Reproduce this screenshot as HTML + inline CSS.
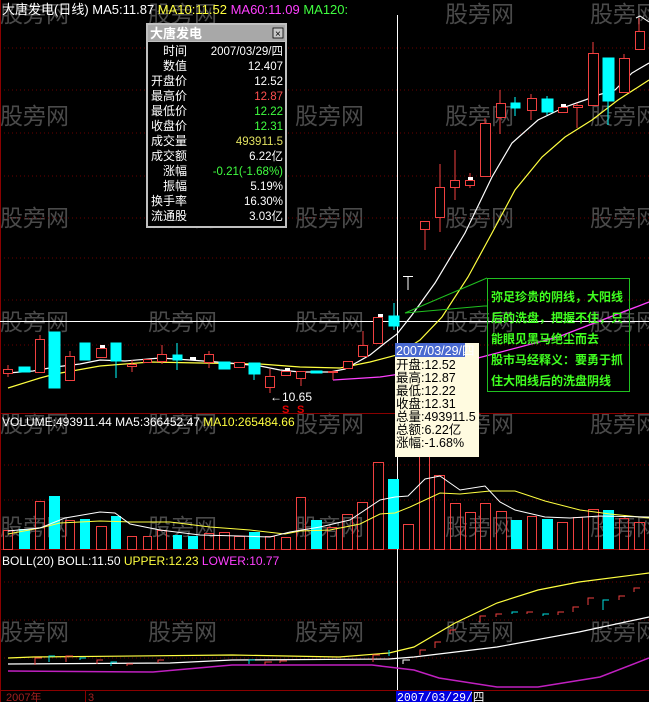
<!DOCTYPE html>
<html><head><meta charset="utf-8"><style>
html,body{margin:0;padding:0;background:#000;width:649px;height:702px;overflow:hidden}
svg{display:block}
text{font-family:"Liberation Sans","Noto Sans CJK SC",sans-serif}
.m{font-family:"Liberation Mono","Noto Sans CJK SC",monospace}
.wm{fill:#4a4a4a;font-size:23px}
</style></head><body>
<svg width="649" height="702" xmlns="http://www.w3.org/2000/svg">
<rect width="649" height="702" fill="#000"/>
<g class="wm">
<text x="0" y="22">股旁网</text><text x="148" y="22">股旁网</text><text x="445" y="22">股旁网</text><text x="590" y="22">股旁网</text>
<text x="0" y="124">股旁网</text><text x="148" y="124">股旁网</text><text x="295" y="124">股旁网</text><text x="445" y="124">股旁网</text><text x="590" y="124">股旁网</text>
<text x="0" y="226">股旁网</text><text x="148" y="226">股旁网</text><text x="295" y="226">股旁网</text><text x="445" y="226">股旁网</text><text x="590" y="226">股旁网</text>
<text x="0" y="330">股旁网</text><text x="148" y="330">股旁网</text><text x="295" y="330">股旁网</text><text x="445" y="330">股旁网</text><text x="590" y="330">股旁网</text>
<text x="0" y="432">股旁网</text><text x="148" y="432">股旁网</text><text x="295" y="432">股旁网</text><text x="445" y="432">股旁网</text><text x="590" y="432">股旁网</text>
<text x="0" y="535">股旁网</text><text x="148" y="535">股旁网</text><text x="295" y="535">股旁网</text><text x="445" y="535">股旁网</text><text x="590" y="535">股旁网</text>
<text x="0" y="640">股旁网</text><text x="148" y="640">股旁网</text><text x="295" y="640">股旁网</text><text x="445" y="640">股旁网</text><text x="590" y="640">股旁网</text>
</g>
<g stroke="#6a0000" stroke-dasharray="1,3" stroke-width="1">
<line x1="0" y1="48" x2="649" y2="48"/><line x1="0" y1="90" x2="649" y2="90"/><line x1="0" y1="133" x2="649" y2="133"/>
<line x1="0" y1="176" x2="649" y2="176"/><line x1="0" y1="218" x2="649" y2="218"/><line x1="0" y1="258" x2="649" y2="258"/>
<line x1="0" y1="300" x2="649" y2="300"/><line x1="0" y1="345" x2="649" y2="345"/>
<line x1="0" y1="465" x2="649" y2="465"/><line x1="0" y1="500" x2="649" y2="500"/>
<line x1="0" y1="582" x2="649" y2="582"/><line x1="0" y1="620" x2="649" y2="620"/><line x1="0" y1="658" x2="649" y2="658"/>
</g>
<g stroke="#8a0000" stroke-width="1">
<line x1="0" y1="413.5" x2="649" y2="413.5"/><line x1="0" y1="549.5" x2="649" y2="549.5"/><line x1="0" y1="690.5" x2="649" y2="690.5"/>
<line x1="0.5" y1="0" x2="0.5" y2="702"/>
</g>
<text x="2" y="14" font-size="13"><tspan fill="#fff">大唐发电(日线) MA5:11.87 </tspan><tspan fill="#ffff40">MA10:11.52 </tspan><tspan fill="#ff40ff">MA60:11.09 </tspan><tspan fill="#40ff40">MA120:</tspan></text>
<line x1="397.5" y1="15" x2="397.5" y2="690" stroke="#fff"/>
<line x1="0" y1="321.5" x2="649" y2="321.5" stroke="#fff"/>
<polyline fill="none" stroke="#ff40ff" stroke-width="1.3" points="333,380 380,377 420,371 478,358 558,337 649,302"/>
<polyline fill="none" stroke="#ffff40" stroke-width="1.2" points="8,388 40,378 55,374 100,366 150,362 200,363 260,364 300,367 340,368 370,362 397,355 420,340 442,317 468,277 492,233 515,190 542,157 565,137 592,120 618,100 649,80"/>
<polyline fill="none" stroke="#fff" stroke-width="1.2" points="8,373 33,371 55,367 80,364 100,360 125,361 160,358 190,360 230,363 260,366 280,370 300,372 330,372 345,369 370,355 385,343 397,334 412,315 435,283 465,233 492,177 512,143 538,120 565,107 585,100 598,95 615,90 632,73 649,63"/>
<polyline fill="none" stroke="#fff" points="636,18 640,16 649,22"/>
<g stroke="#f04040" fill="#000" stroke-width="1">
<line x1="8" y1="365" x2="8" y2="377"/><rect x="3.5" y="369.5" width="9" height="4"/>
<line x1="40" y1="335" x2="40" y2="339"/><rect x="35.5" y="339.5" width="9" height="33"/>
<line x1="70" y1="351" x2="70" y2="356"/><rect x="65.5" y="356.5" width="9" height="24"/>
<rect x="96.5" y="348.5" width="10" height="9"/>
<line x1="132" y1="360" x2="132" y2="372"/><rect x="127.5" y="364.5" width="9" height="2"/>
<rect x="143.5" y="359.5" width="8" height="3"/>
<line x1="162" y1="345" x2="162" y2="364"/><rect x="157.5" y="354.5" width="9" height="7"/>
<line x1="209" y1="351" x2="209" y2="368"/><rect x="204.5" y="354.5" width="9" height="8"/>
<rect x="234.5" y="362.5" width="10" height="5"/>
<line x1="270" y1="369" x2="270" y2="393"/><rect x="265.5" y="376.5" width="9" height="11"/>
<rect x="281.5" y="371.5" width="9" height="4"/>
<line x1="301" y1="378" x2="301" y2="386"/><rect x="296.5" y="371.5" width="9" height="7"/>
<line x1="333" y1="372" x2="333" y2="380"/><rect x="328.5" y="371.5" width="9" height="1"/>
<rect x="343.5" y="361.5" width="9" height="7"/>
<line x1="363" y1="331" x2="363" y2="345"/><rect x="358.5" y="345.5" width="9" height="11"/>
<rect x="373.5" y="317.5" width="9" height="26"/>
<line x1="425" y1="229" x2="425" y2="250"/><rect x="420.5" y="221.5" width="9" height="8"/>
<line x1="440" y1="164" x2="440" y2="232"/><rect x="435.5" y="187.5" width="9" height="30"/>
<line x1="455" y1="150" x2="455" y2="200"/><rect x="450.5" y="180.5" width="9" height="7"/>
<line x1="470" y1="173" x2="470" y2="188"/><rect x="465.5" y="180.5" width="9" height="5"/>
<line x1="485" y1="118" x2="485" y2="123"/><rect x="480.5" y="123.5" width="10" height="53"/>
<line x1="500" y1="90" x2="500" y2="134"/><rect x="496.5" y="103.5" width="9" height="14"/>
<line x1="531" y1="94" x2="531" y2="120"/><rect x="527.5" y="98.5" width="9" height="12"/>
<rect x="558.5" y="107.5" width="9" height="5"/>
<line x1="577" y1="103" x2="577" y2="128"/><rect x="573.5" y="105.5" width="9" height="2"/>
<line x1="593" y1="42" x2="593" y2="53"/><rect x="588.5" y="53.5" width="10" height="52"/>
<line x1="624" y1="54" x2="624" y2="58"/><rect x="619.5" y="58.5" width="10" height="34"/>
<line x1="639" y1="18" x2="639" y2="31"/><rect x="635.5" y="31.5" width="9" height="18"/>
</g>
<g fill="#00ffff" stroke="#00ffff">
<rect x="19" y="367" width="11" height="5"/>
<rect x="49" y="332" width="11" height="56"/>
<rect x="80" y="343" width="10" height="17"/>
<line x1="116" y1="361" x2="116" y2="378"/><rect x="111" y="343" width="10" height="18"/>
<line x1="177" y1="343" x2="177" y2="370"/><rect x="173" y="355" width="9" height="5"/>
<rect x="219" y="362" width="11" height="7"/>
<line x1="254" y1="374" x2="254" y2="380"/><rect x="249" y="363" width="11" height="11"/>
<rect x="311" y="371" width="11" height="2"/>
<line x1="394" y1="303" x2="394" y2="330"/><rect x="389" y="316" width="10" height="10"/>
<line x1="515" y1="97" x2="515" y2="116"/><rect x="511" y="103" width="9" height="5"/>
<line x1="547" y1="96" x2="547" y2="115"/><rect x="542" y="99" width="11" height="13"/>
<line x1="608" y1="101" x2="608" y2="125"/><rect x="603" y="58" width="11" height="43"/>
</g>
<g fill="#fff"><rect x="100" y="345" width="5" height="3"/><rect x="378" y="314" width="5" height="3"/><rect x="285" y="368" width="5" height="3"/><rect x="468" y="177" width="5" height="3"/><rect x="561" y="104" width="5" height="3"/><rect x="190" y="357" width="6" height="3"/></g>
<g stroke="#fff"><line x1="403" y1="276.5" x2="413" y2="276.5"/><line x1="408" y1="277" x2="408" y2="290"/></g>
<text x="270" y="401" fill="#fff" font-size="12">←10.65</text>
<text x="282" y="413" fill="#e00000" font-size="11" font-weight="bold">S</text><text x="297" y="413" fill="#e00000" font-size="11" font-weight="bold">S</text>
<g stroke="#20c020" fill="none"><rect x="487.5" y="278.5" width="142" height="113"/><polyline points="487,278 405,313 484,306 487,306"/></g>
<g fill="#40ff20" font-size="12" font-weight="bold">
<text x="491" y="301">弥足珍贵的阴线，大阳线</text>
<text x="491" y="322">后的洗盘，把握不住，只</text>
<text x="491" y="343">能眼见黑马绝尘而去</text>
<text x="491" y="364">股市马经释义：要勇于抓</text>
<text x="491" y="385">住大阳线后的洗盘阴线</text>
</g>
<text x="2" y="426" font-size="12"><tspan fill="#fff">VOLUME:493911.44  MA5:366452.47 </tspan><tspan fill="#ffff40">MA10:265484.66</tspan></text>
<g stroke="#f04040" fill="none">
<rect x="3.5" y="530.5" width="9" height="19"/><rect x="35.5" y="501.5" width="9" height="48"/><rect x="65.5" y="520.5" width="9" height="29"/>
<rect x="96.5" y="526.5" width="10" height="23"/><rect x="127.5" y="536.5" width="9" height="13"/><rect x="143.5" y="536.5" width="8" height="13"/>
<rect x="157.5" y="530.5" width="9" height="19"/><rect x="204.5" y="533.5" width="9" height="16"/><rect x="219.5" y="532.5" width="10" height="17"/>
<rect x="234.5" y="536.5" width="10" height="13"/><rect x="265.5" y="536.5" width="9" height="13"/><rect x="281.5" y="537.5" width="9" height="12"/>
<rect x="296.5" y="497.5" width="9" height="52"/><rect x="327.5" y="527.5" width="9" height="22"/><rect x="342.5" y="514.5" width="10" height="35"/>
<rect x="357.5" y="502.5" width="10" height="47"/><rect x="373.5" y="462.5" width="10" height="87"/>
<rect x="403.5" y="524.5" width="10" height="25"/><rect x="419.5" y="430.5" width="10" height="119"/><rect x="434.5" y="475.5" width="10" height="74"/>
<rect x="450.5" y="503.5" width="10" height="46"/><rect x="465.5" y="512.5" width="10" height="37"/><rect x="480.5" y="503.5" width="10" height="46"/>
<rect x="496.5" y="511.5" width="10" height="38"/><rect x="527.5" y="516.5" width="9" height="33"/><rect x="557.5" y="522.5" width="10" height="27"/>
<rect x="573.5" y="517.5" width="9" height="32"/><rect x="588.5" y="509.5" width="10" height="40"/><rect x="619.5" y="518.5" width="9" height="31"/><rect x="634.5" y="522.5" width="10" height="27"/>
</g>
<g fill="#00ffff">
<rect x="19" y="529" width="11" height="20"/><rect x="49" y="496" width="11" height="53"/><rect x="80" y="519" width="10" height="30"/>
<rect x="111" y="516" width="10" height="33"/><rect x="173" y="535" width="9" height="14"/><rect x="188" y="536" width="10" height="13"/>
<rect x="249" y="532" width="11" height="17"/><rect x="311" y="520" width="11" height="29"/><rect x="388" y="479" width="11" height="70"/>
<rect x="511" y="520" width="11" height="29"/><rect x="542" y="519" width="11" height="30"/><rect x="603" y="510" width="11" height="39"/>
</g>
<polyline fill="none" stroke="#ffff40" points="8,534 40,528 60,523 100,521 130,522 170,522 210,527 250,530 285,534 300,531 330,530 360,524 380,514 395,513 410,507 440,493 460,494 490,491 515,491 545,501 580,510 610,514 649,518"/>
<polyline fill="none" stroke="#fff" points="8,531 40,528 65,518 100,512 115,513 130,524 160,530 200,535 240,536 270,537 290,532 320,527 350,520 380,500 395,497 408,496 425,479 440,476 460,490 485,486 500,502 515,510 545,517 570,518 600,516 649,517"/>
<text x="2" y="565" font-size="12"><tspan fill="#fff">BOLL(20)  BOLL:11.50 </tspan><tspan fill="#ffff40">UPPER:12.23 </tspan><tspan fill="#ff40ff">LOWER:10.77</tspan></text>
<polyline fill="none" stroke="#ffff40" stroke-width="1.2" points="8,658 33,657 232,655 339,657 389,653 414,647 455,623 497,603 538,590 579,582 649,573"/>
<polyline fill="none" stroke="#fff" stroke-width="1.2" points="8,664 170,663 232,660 389,659 414,657 497,647 579,632 649,617"/>
<polyline fill="none" stroke="#c020c0" stroke-width="1.5" points="8,671 153,672 232,665 372,665 414,670 439,678 497,687 538,687 600,677 649,658"/>
<g stroke="#f04040" fill="none"><polyline points="35,665 35,658 42,658"/><polyline points="66,662 66,656 73,656"/><polyline points="97,664 97,660 103,660"/><polyline points="127,666 127,664 133,664"/><polyline points="158,663 158,660 164,660"/><polyline points="265,665 265,662 272,662"/><polyline points="280,663 280,661 287,661"/><polyline points="373,662 373,655 380,655"/><polyline points="420,655 420,650 426,650"/><polyline points="435,648 435,642 441,642"/><polyline points="450,634 450,630 456,630"/><polyline points="480,622 480,616 486,616"/><polyline points="496,617 496,614 502,614"/><polyline points="527,614 527,612 533,612"/><polyline points="558,615 558,612 564,612"/><polyline points="573,612 573,607 579,607"/><polyline points="588,605 588,598 594,598"/><polyline points="619,600 619,596 625,596"/><polyline points="634,592 634,588 640,588"/></g>
<g stroke="#00e0e0" fill="none"><polyline points="49,662 49,656 55,656"/><polyline points="80,660 80,658 86,658"/><polyline points="111,666 111,662 117,662"/><polyline points="249,664 249,660 255,660"/><polyline points="512,614 512,612 518,612"/><polyline points="543,616 543,614 549,614"/><polyline points="603,610 603,600 609,600"/><polyline points="389,656 389,650"/></g>
<polyline fill="none" stroke="#fff" points="403,664 403,660 410,660"/>
<text x="6" y="701" fill="#a02020" font-size="11">2007年</text>
<line x1="85.5" y1="690" x2="85.5" y2="702" stroke="#8a0000"/>
<text x="88" y="701" fill="#a02020" font-size="11">3</text>
<rect x="396" y="691" width="76" height="11" fill="#0000e0"/>
<text x="397" y="701" fill="#fff" font-size="11.5" class="m">2007/03/29/四</text>
<rect x="146" y="23" width="141" height="205" fill="#c0c0c0"/>
<rect x="148" y="25" width="137" height="16" fill="#a8a8a8"/>
<text x="150" y="38" fill="#fff" font-size="13" font-weight="bold">大唐发电</text>
<rect x="273" y="28" width="10" height="10" fill="#c8c8c8" stroke="#000" stroke-width="0.8"/>
<text x="275" y="37" font-size="10" fill="#000">×</text>
<rect x="148" y="42" width="137" height="184" fill="#000"/>
<g font-size="12" text-anchor="end">
<g fill="#fff"><text x="187" y="55">时间</text><text x="187" y="70">数值</text><text x="187" y="85">开盘价</text><text x="187" y="100">最高价</text><text x="187" y="115">最低价</text><text x="187" y="130">收盘价</text><text x="187" y="145">成交量</text><text x="187" y="160">成交额</text><text x="187" y="175">涨幅</text><text x="187" y="190">振幅</text><text x="187" y="205">换手率</text><text x="187" y="220">流通股</text></g>
<g class="m" font-size="11.5">
<text x="283" y="55" fill="#fff">2007/03/29/四</text><text x="283" y="70" fill="#fff">12.407</text><text x="283" y="85" fill="#fff">12.52</text>
<text x="283" y="100" fill="#ff5050">12.87</text><text x="283" y="115" fill="#40ff40">12.22</text><text x="283" y="130" fill="#40ff40">12.31</text>
<text x="283" y="145" fill="#e0e060">493911.5</text><text x="283" y="160" fill="#fff">6.22亿</text><text x="283" y="175" fill="#40ff40">-0.21(-1.68%)</text>
<text x="283" y="190" fill="#fff">5.19%</text><text x="283" y="205" fill="#fff">16.30%</text><text x="283" y="220" fill="#fff">3.03亿</text>
</g></g>
<rect x="395" y="343" width="84" height="114" fill="#fffbe0"/>
<rect x="395" y="343" width="70" height="14" fill="#4a6ad0"/>
<g class="m" font-size="12.5">
<text x="396" y="355" fill="#fff">2007/03/29/四</text>
<g fill="#000"><text x="396" y="369">开盘:12.52</text><text x="396" y="382">最高:12.87</text><text x="396" y="395">最低:12.22</text><text x="396" y="408">收盘:12.31</text><text x="396" y="421">总量:493911.5</text><text x="396" y="434">总额:6.22亿</text><text x="396" y="447">涨幅:-1.68%</text></g>
</g>
</svg>
</body></html>
